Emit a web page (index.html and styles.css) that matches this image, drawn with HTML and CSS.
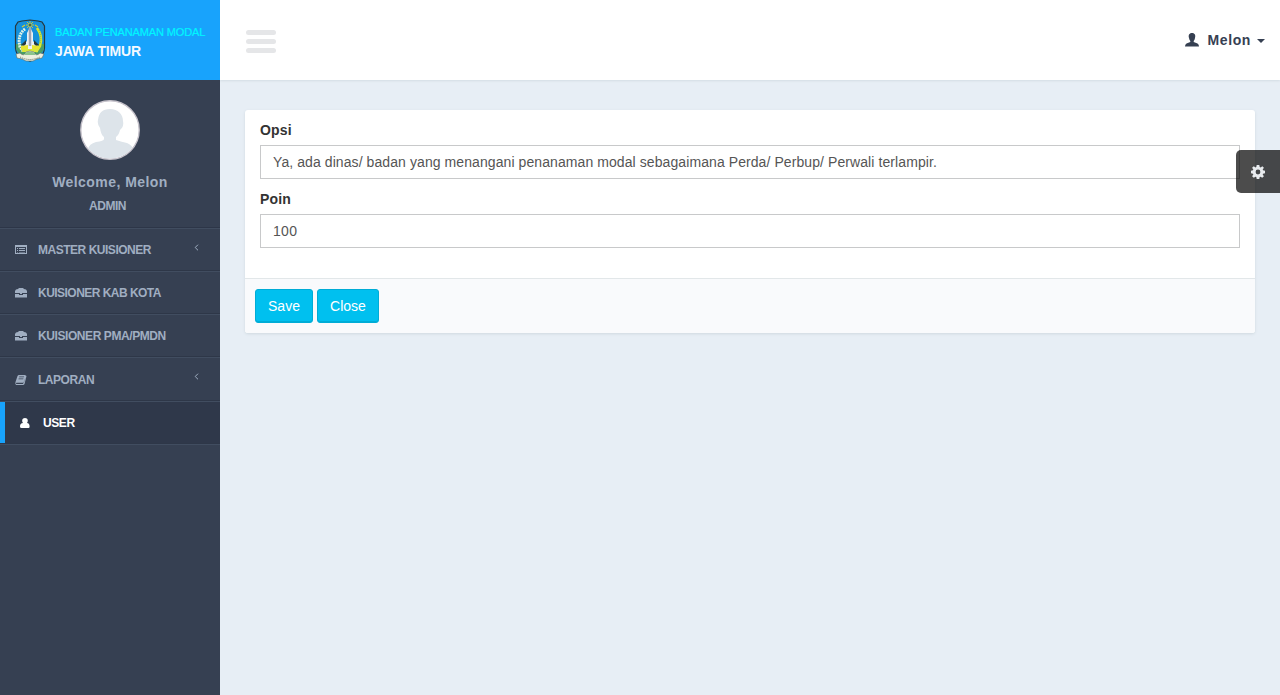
FILE: index.html
```html
<!DOCTYPE html>
<html lang="id">
<head>
<meta charset="utf-8">
<title>Badan Penanaman Modal</title>
<link rel="stylesheet" href="styles.css">
</head>
<body>
<aside class="sidebar">
  <div class="brand">
    <svg class="crest" width="32" height="44" viewBox="0 0 32 44">
      <path d="M8 2L16 1L24 2L28 3L30.500 7V29Q30 35 26 38L16 42L6 38Q2 35 1.500 29V7L4 3Z" fill="#1591dc" stroke="#26383f" stroke-width="1.200"/>
      <path d="M2 25H30V30Q28 36 16 40Q4 36 2 30Z" fill="#489d68"/>
      <path d="M11 10Q3 16 6 28L9 32" fill="none" stroke="#e4f4e6" stroke-width="3" stroke-dasharray="1.800 .8"/>
      <path d="M23 9Q29 17 26 27L22 33" fill="none" stroke="#dce530" stroke-width="2.600"/>
      <path d="M25 11Q28 18 26 25" fill="none" stroke="#4ca866" stroke-width=".7" stroke-dasharray="1 1"/>
      <path d="M16 2V10M12 6H20M13 3L19 9M19 3L13 9" fill="none" stroke="#d9cb2c" stroke-width=".9"/>
      <path d="M8 8L11 6M24 8L21 6" stroke="#d9cb2c" stroke-width="1.200"/>
      <circle cx="16" cy="6" r="1.100" fill="#3c5339"/>
      <path d="M13 14L16 8L19 14V22L24 27V31H8V27L13 22Z" fill="#edf1f4"/>
      <path d="M16 9V27" stroke="#a0a4b4" stroke-width="2.500"/>
      <path d="M7 26L12 21V25L10 27ZM20 21L25 26L22 27L20 25Z" fill="#26363c"/>
      <path d="M7 27L14 26V31H7ZM18 26L25 27V31H18Z" fill="#e7e42f"/>
      <path d="M8 30H24V33H8Z" fill="#d9e73c"/>
      <path d="M2 35L6 34Q10 38 12 33Q16 31 20 33Q22 38 26 34L30 35L28 39L23 40L19 42H12L8 40L3 39Z" fill="#edf0df" stroke="#5d6860" stroke-width=".6"/>
      <path d="M11 34Q16 31 21 34V36H11Z" fill="#8bc38c"/>
      <path d="M6 38Q16 43 26 38" fill="none" stroke="#646d64" stroke-dasharray="1 1"/>
    </svg>
    <div class="brand-text"><div class="brand-top">BADAN PENANAMAN MODAL</div><div class="brand-name">JAWA TIMUR</div></div>
  </div>
  <div class="profile">
    <svg class="avatar" width="60" height="60" viewBox="0 0 60 60">
      <defs><clipPath id="face"><circle cx="30" cy="30" r="28.500"/></clipPath></defs>
      <circle cx="30" cy="30" r="29.200" fill="#fff" stroke="#c6c2cb" stroke-width="1.400"/>
      <path clip-path="url(#face)" d="M30 9C38 9 43 14 43 21C44 26 42 28 40 30Q39 35 36 37V40Q42 42 47 43Q52 45 54 50L54 60H6L8 49Q9 44 16 42Q24 41 24 39V37Q21 35 20 28Q17 24 18 20Q19 9 30 9Z" fill="#dde4ea"/>
    </svg>
    <div class="welcome">Welcome, Melon</div>
    <div class="role">ADMIN</div>
  </div>
  <nav class="menu">
    <a class="item"><svg class="icon" width="12" height="12" viewBox="0 0 12 12"><path fill-rule="evenodd" d="M0 1H12V10H0ZM1 3V9H11V3Z"/><path d="M2 4H3V5H2ZM4 4H10V5H4ZM2 6H3V7H2ZM4 6H10V7H4ZM2 8H3V8.600H2ZM4 8H10V8.600H4Z"/></svg><span class="w-master">MASTER KUISIONER</span><svg class="chevron" width="5" height="7" viewBox="0 0 5 7"><path d="M4 .7L1.200 3.500L4 6.300"/></svg></a>
    <a class="item"><svg class="icon" width="12" height="12" viewBox="0 0 12 12"><path d="M3 2L4 1H8L9 2L11 2.500L12 4V6H0V4L1 2.500ZM0 7H4V8H8V7H12V10.500H0ZM5 6H7V7H5Z"/></svg><span class="w-kab">KUISIONER KAB KOTA</span></a>
    <a class="item"><svg class="icon" width="12" height="12" viewBox="0 0 12 12"><path d="M3 2L4 1H8L9 2L11 2.500L12 4V6H0V4L1 2.500ZM0 7H4V8H8V7H12V10.500H0ZM5 6H7V7H5Z"/></svg><span class="w-pma">KUISIONER PMA/PMDN</span></a>
    <a class="item tall"><svg class="icon" width="12" height="12" viewBox="0 0 12 12"><path fill-rule="evenodd" d="M4 1H10L11.500 2L9.500 10Q9 11 8 11H1Q0 10 .5 8L2.500 2Q3 1 4 1ZM4.300 2.500L4 3.300H8.800L9.100 2.500ZM3.700 4.500L3.400 5.300H8.200L8.500 4.500ZM1.300 8.800L1 10H8L10.500 3.500L8.800 8.800Z"/></svg><span class="w-laporan">LAPORAN</span><svg class="chevron" width="5" height="7" viewBox="0 0 5 7"><path d="M4 .7L1.200 3.500L4 6.300"/></svg></a>
    <a class="item active"><svg class="icon" width="10" height="12" viewBox="0 0 10 12"><path d="M5 1C8 1 8.500 4 7 6Q9.600 6 9.600 9.500Q9.600 11 8.500 11H1.500Q0 11 0 9.500Q0 6 3 6C1.500 4 2 1 5 1Z"/></svg><span class="w-user">USER</span></a>
  </nav>
</aside>
<div class="page">
  <header class="topbar">
    <div class="toggle"><i></i><i></i><i></i></div>
    <div class="account"><svg width="14" height="14" viewBox="0 0 14 14"><path d="M7 0C10 0 10.800 2.500 10 5Q9.700 7 8.700 8V9L12.500 10.500Q14 11.500 14 13.500H0Q0 11.500 1.500 10.500L5.300 9V8Q4.300 7 4 5C3.200 2.500 4 0 7 0Z"/></svg><span>Melon</span><b class="caret"></b></div>
  </header>
  <main class="content">
    <form class="card">
      <div class="card-body">
        <label for="opsi">Opsi</label>
        <input id="opsi" value="Ya, ada dinas/ badan yang menangani penanaman modal sebagaimana Perda/ Perbup/ Perwali terlampir.">
        <label for="poin">Poin</label>
        <input id="poin" value="100">
      </div>
      <div class="card-footer"><button class="save" type="button">Save</button><button class="close" type="button">Close</button></div>
    </form>
  </main>
</div>
<div class="settings"><svg width="14" height="14" viewBox="0 0 14 14"><path fill-rule="evenodd" d="M5.700 0H8.300L8.700 2L9.700 2.400L11.300 1.200L12.900 2.800L11.700 4.400L12 5.300L14 5.700V8.300L12 8.700L11.700 9.600L12.900 11.200L11.200 12.800L9.600 11.700L8.700 12L8.300 14H5.700L5.300 12L4.400 11.700L2.800 12.800L1.100 11.200L2.300 9.600L2 8.700L0 8.300V5.700L2 5.300L2.300 4.400L1.100 2.800L2.800 1.200L4.400 2.400L5.300 2ZM7 4.600A2.400 2.400 0 1 0 7 9.400A2.400 2.400 0 1 0 7 4.600Z"/></svg></div>
</body>
</html>
```
FILE: styles.css
```css
* { box-sizing: border-box; }
body { margin: 0; display: flex; height: 695px; overflow: hidden; background: #e7eef5; color: #333; font: 14px/20px "Liberation Sans", Arial, sans-serif; }
.sidebar { width: 220px; flex: none; position: relative; z-index: 1; background: #364052; color: #a0aec1; }
.brand { height: 80px; background: #18a3fc; display: flex; padding: 19px 0 0 14px; }
.crest { flex: none; }
.brand-text { padding: 4px 0 0 9px; white-space: nowrap; }
.brand-top { font-size: 11px; line-height: 18px; letter-spacing: -.12px; color: #00f6ff; -webkit-text-stroke: .2px #00f6ff; }
.brand-name { font-size: 14px; line-height: 20px; font-weight: bold; letter-spacing: -.13px; color: #f3f9ff; }
.profile { height: 148px; padding-top: 20px; text-align: center; border-bottom: 1px solid #2d3648; }
.avatar { display: block; margin: 0 auto; }
.welcome { margin-top: 12px; font-weight: bold; letter-spacing: .45px; }
.role { margin: 4px 5px 0 0; font-size: 12px; font-weight: bold; letter-spacing: -.45px; }
.item { display: flex; align-items: center; height: 43px; padding: 0 21px 0 15px; border-top: 1px solid #414d60; border-bottom: 1px solid #2e3748; font-size: 12px; font-weight: bold; letter-spacing: -.2px; }
.item.tall { height: 44px; padding-top: 1px; }
.icon { flex: none; fill: currentColor; }
.item span { margin-left: 11px; white-space: nowrap; }
.w-master { letter-spacing: -.48px; }
.w-kab { letter-spacing: -.53px; }
.w-pma { letter-spacing: -.42px; }
.w-laporan { letter-spacing: -.46px; }
.w-user { letter-spacing: -.4px; }
.chevron { margin: 0 0 5px auto; fill: none; stroke: currentColor; }
.tall .chevron { margin-bottom: 7px; }
.item.active { padding-left: 20px; background: linear-gradient(90deg, #18a3fc 5px, #2f384a 5px) padding-box; color: #fff; }
.active span { margin-left: 13px; }
.menu { border-bottom: 1px solid #414d60; }
.page { flex: 1; min-width: 0; }
.topbar { height: 80px; background: #fff; display: flex; align-items: center; justify-content: space-between; padding: 0 15px 0 26px; box-shadow: 0 1px 2px #d3dce3; }
.toggle { display: grid; gap: 4px; padding-top: 3px; }
.toggle i { width: 30px; height: 5px; border-radius: 3px; background: #e5e6e8; }
.account { display: flex; align-items: center; color: #364052; fill: currentColor; font-weight: bold; }
.account svg { margin-bottom: 1px; }
.account span { margin-left: 9px; letter-spacing: .6px; }
.caret { margin: 2px 0 0 6px; border: 4px solid transparent; border-top-color: #364052; border-bottom: 0; }
.content { padding: 30px 25px; }
.card { height: 223px; border-radius: 3px; overflow: hidden; background: #fff; box-shadow: 0 1px 3px #cfd8df; }
.card-body { height: 168px; padding: 10px 15px; }
label { display: block; margin-bottom: 5px; font-weight: bold; letter-spacing: .15px; }
input { display: block; width: 100%; height: 34px; margin-bottom: 10px; padding: 6px 12px; border: 1px solid #c8c9ca; color: #555; background: #fff; font: inherit; letter-spacing: .083px; }
#poin { letter-spacing: .3px; }
.card-footer { height: 55px; padding: 10px; display: flex; gap: 4px; border-top: 1px solid #e2e7e9; background: #f9fafc; }
button { height: 34px; padding: 0; border: 1px solid #00acd6; border-radius: 3px; background: #00c0ef; color: #fff; font: inherit; box-shadow: inset 0 -1px 0 #00acd6; }
.save { width: 58px; }
.close { width: 62px; }
.settings { position: absolute; top: 150px; right: 0; width: 44px; height: 43px; display: flex; align-items: center; padding-left: 15px; border-radius: 5px 0 0 5px; background: rgba(0,0,0,.7); fill: #e8ebee; }
```
